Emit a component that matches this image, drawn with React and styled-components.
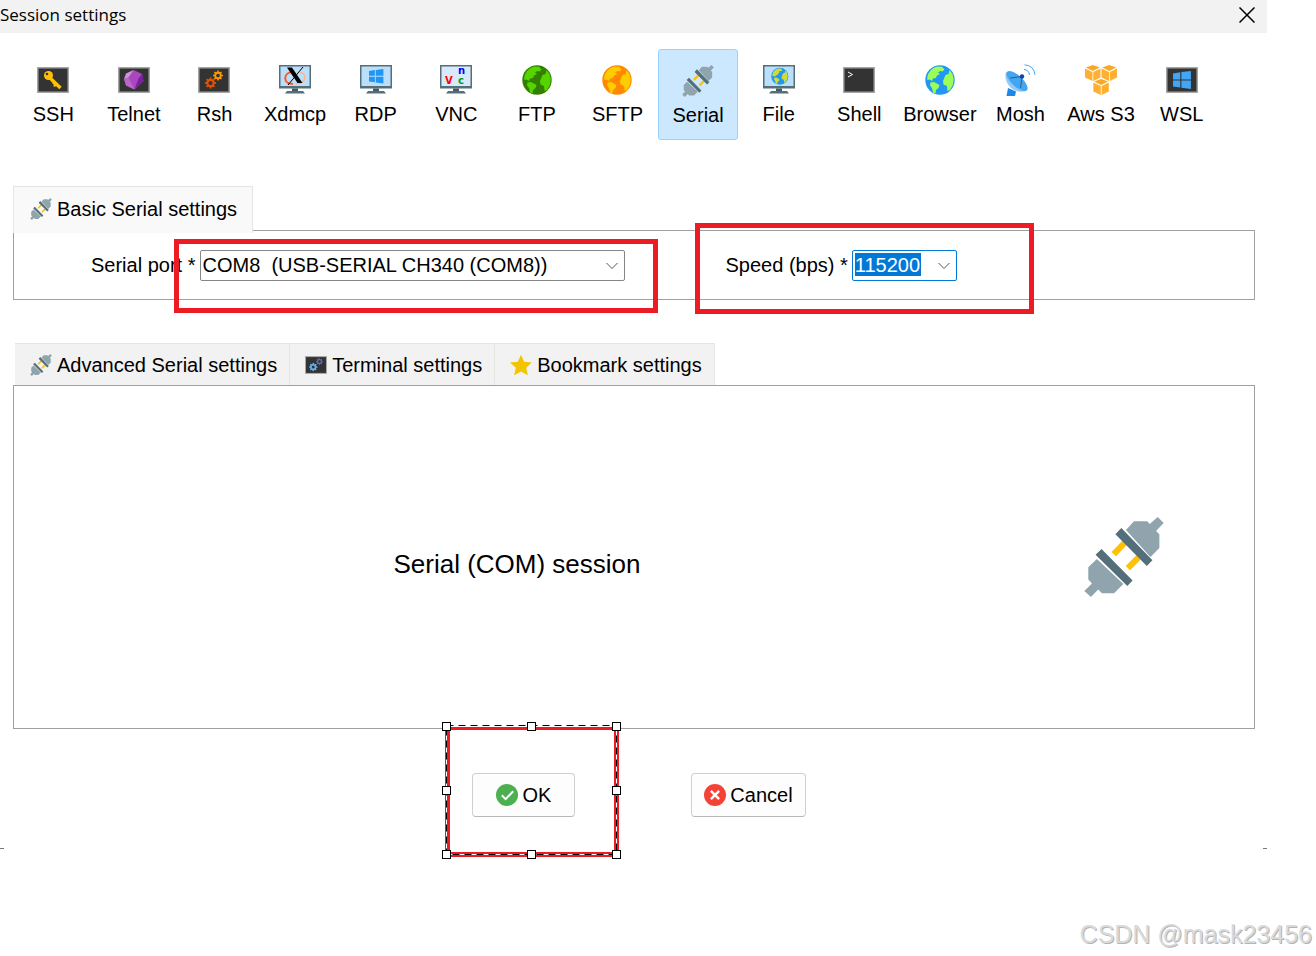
import styled, { createGlobalStyle } from "styled-components";

const GlobalStyle = createGlobalStyle`
  * {
    box-sizing: border-box;
  }
  body {
    margin: 0;
    background-color: #fff;
    color: #000;
    font-family: "Liberation Sans", Arial, sans-serif;
    font-size: 20px;
    line-height: 24px;
  }
  button,
  select {
    margin: 0;
    font: inherit;
    color: inherit;
  }
  svg {
    display: block;
    flex: none;
  }
`;

const StyledDialog = styled.div`
  position: relative;
  margin-right: 49px;
  padding-bottom: 32px;
  &::before,
  &::after {
    content: "";
    position: absolute;
    bottom: 0;
    width: 4px;
    height: 1px;
    background-color: #777;
  }
  &::before {
    left: 0;
  }
  &::after {
    right: 0;
  }
`;
const StyledTitleBar = styled.header`
  display: flex;
  justify-content: space-between;
  align-items: center;
  height: 33px;
  padding-right: 12px;
  background-color: #f2f2f2;
  h1 {
    margin: 0;
    padding-bottom: 4px;
    font: 400 17px/24px "Open Sans", sans-serif;
  }
`;
const StyledCloseButton = styled.button`
  padding: 0 0 4px;
  border: none;
  background: none;
`;
const StyledToolbar = styled.nav`
  display: grid;
  grid-template-columns: repeat(15, 1fr);
  padding: 16px 45px 0 13px;
`;
const StyledTool = styled.button`
  display: flex;
  flex-direction: column;
  align-items: center;
  gap: 6px;
  height: 91px;
  padding: 15px 0 0;
  white-space: nowrap;
  background-color: ${({ $active }) => ($active ? "#cce8ff" : "transparent")};
  border: ${({ $active }) => ($active ? "1px solid #99d1ff" : "none")};
  border-radius: 3px;
`;
const StyledMain = styled.main`
  padding: 46px 12px 0 13px;
`;
const StyledTabs = styled.div`
  display: flex;
  padding-left: 2px;
`;
const StyledTab = styled.button`
  display: flex;
  align-items: center;
  gap: 5px;
  height: 42px;
  padding: 0 12px 0 15px;
  white-space: nowrap;
  background-color: #f2f2f2;
  border: solid #e5e5e5;
  border-width: 1px 1px 0 0;
`;
const StyledActiveTab = styled(StyledTab)`
  position: relative;
  height: 47px;
  margin-bottom: -3px;
  padding: 0 15px 2px 16px;
  background-color: #f9f9f9;
  border-width: 1px 1px 0 1px;
`;
const StyledPanel = styled.section`
  border: 1px solid #a0a0a0;
`;
const StyledFieldPanel = styled(StyledPanel)`
  display: flex;
  gap: 101px;
  margin-bottom: 43px;
  padding: 19px 0 18px 77px;
`;
const StyledSessionPanel = styled(StyledPanel)`
  display: grid;
  grid-template-columns: 1fr 208px;
  align-items: center;
  justify-items: center;
  height: 344px;
  padding-right: 26px;
  h2 {
    margin: 0;
    padding-top: 14px;
    font-size: 26px;
    font-weight: 400;
    line-height: 32px;
  }
`;
const StyledField = styled.div`
  position: relative;
  display: flex;
  align-items: center;
  gap: 4px;
  white-space: nowrap;
  label {
    padding-bottom: 2px;
  }
`;
const StyledCombo = styled.div`
  position: relative;
  width: ${({ $width }) => $width};
  svg {
    position: absolute;
    top: 12px;
    right: 7px;
    pointer-events: none;
  }
`;
const StyledSelect = styled.select`
  display: block;
  width: 100%;
  height: 31px;
  padding: 2px 35px 4px 2px;
  appearance: none;
  outline: none;
  border: 1px solid #868686;
  border-radius: 2px;
  background-color: #fff;
`;
const StyledSelectedSelect = styled(StyledSelect)`
  border-color: #0078d7;
  background-color: #0078d7;
  background-clip: content-box;
  color: #fff;
`;
const StyledMark = styled.div`
  position: absolute;
  inset: ${({ $inset }) => $inset};
  border: 5px solid #ed1c24;
  pointer-events: none;
`;
const StyledFooter = styled.footer`
  display: flex;
  justify-content: center;
  gap: 116px;
  padding: 44px 0 0 10px;
`;
const StyledAction = styled.div`
  position: relative;
`;
const StyledButton = styled.button`
  display: flex;
  align-items: center;
  justify-content: center;
  gap: 4px;
  min-width: 103px;
  height: 44px;
  padding: 0 12px;
  background-color: #fdfdfd;
  border: 1px solid #d0d0d0;
  border-bottom-color: #b8b8b8;
  border-radius: 4px;
`;
const StyledSelection = styled.svg`
  position: absolute;
  top: -52px;
  left: -31px;
  pointer-events: none;
`;
const StyledWatermark = styled.p`
  margin: 69px 4px 0 0;
  text-align: right;
  font-size: 25px;
  line-height: 32px;
  color: #dadada;
  text-shadow: 1px 1px 0 #b4b4b4;
`;

function Icon({ size = 32, children }) {
  return (
    <svg width={size} height={size} viewBox="0 0 32 32" aria-hidden="true">
      {children}
    </svg>
  );
}

function Screen() {
  return (
    <>
      <path fill="#a6a6a6" d="M0 3h32v26H0z" />
      <path fill="#333" d="M1.5 4.5h29v23h-29z" />
    </>
  );
}

function Monitor({ fill = "#bbdefb" }) {
  return (
    <>
      <path fill="#546e7a" d="M0 1h32v23.500H0z" />
      <path fill={fill} d="M1.500 2.500h29v19.500h-29z" />
      <path fill="#455a64" d="M13 24.500h6v3h-6z" />
      <path fill="#546e7a" d="M8 27h16l2 2.500H6z" />
    </>
  );
}

function Globe({ sea, land }) {
  return (
    <>
      <circle cx="16" cy="16" r="14.700" fill={sea} />
      <path
        fill={land}
        d="M4.500 9.500C6.500 5.500 10 3 13.500 2.500L18 2.800 20.500 5.500 18.500 7.500 16.500 7 14 8.500 16 10 13 11.500 12 14 9 14.500 8 17 5.500 15.500 3.500 16C2.800 14 3.500 11.500 4.500 9.500zM6.500 18.500l3.500-.5 5.500 3-1 3-2.500 2-.5 3.500-2.500-1-1-4.500-2-2.500zM19 17l2.500-6 3-1 1-4 3 4 1.200 5-.7 5.500-3 5.500-2.500 1-.5-5-3.500-1.500z"
      />
    </>
  );
}

function Gear({ x, y, r, color }) {
  const teeth = [0, 45, 90, 135, 180, 225, 270, 315];
  return (
    <g transform={`translate(${x} ${y})`} fill={color}>
      <circle r={r * 0.62} fill="none" stroke={color} strokeWidth={r * 0.42} />
      {teeth.map((angle) => (
        <rect
          key={angle}
          x={-r * 0.18}
          y={-r * 1.1}
          width={r * 0.36}
          height={r * 0.4}
          transform={`rotate(${angle})`}
        />
      ))}
    </g>
  );
}

function WindowsLogo({ fill }) {
  return (
    <path
      fill={fill}
      d="M0 2.200L6.500 1.200V7.500H0zM7.500 1L16 0V7.500H7.500zM0 8.500H6.500V14.800L0 13.800zM7.500 8.500H16V16L7.500 15z"
    />
  );
}

function Plug({ size = 32 }) {
  return (
    <svg width={size} height={size} viewBox="72 51 240 242" aria-hidden="true">
      <path
        fill="#90a4ae"
        d="M198 90l24-26h40l8 8 24-21 18 18-23 24 10 10v42l-27 27zM110 178l-26 25v37l11 12-23 23 20 18 22-23 11 12h37l28-28z"
      />
      <path
        fill="#ffc107"
        d="M188 122l14 12-34 36-14-13zM230 166l12 14-32 32-13-13z"
      />
      <path
        fill="#546e7a"
        d="M184 84l94 98-17 17-95-96zM124 148l94 95-16 17-96-95z"
      />
    </svg>
  );
}

function Cube({ x, y }) {
  return (
    <g transform={`translate(${x} ${y})`}>
      <path fill="#ffb032" d="M0 3.500L7.500 7v9L0 12.500z" />
      <path fill="#ffb032" d="M8.300 7L15.500 3.500v9L8.300 16z" />
      <path fill="#f9a825" d="M.8 2.600L7.800 0l7 2.600-7 3.300z" />
    </g>
  );
}

function Chevron() {
  return (
    <svg width="12" height="8" viewBox="0 0 12 8" aria-hidden="true">
      <path d="M.5 1l5.500 5.500L11.500 1" fill="none" stroke="#555" />
    </svg>
  );
}

const tools = [
  {
    name: "SSH",
    icon: (
      <Icon>
        <Screen />
        <path stroke="#ffc107" strokeWidth="3.500" d="M12 13l11.500 11" />
        <path fill="#ffc107" d="M15 19l2 2-1 1 2 1 2-2-3-4z" />
        <circle cx="11.500" cy="11.500" r="4.500" fill="#ffc107" />
        <circle cx="10" cy="10" r="1.300" fill="#333" />
      </Icon>
    ),
  },
  {
    name: "Telnet",
    icon: (
      <Icon>
        <Screen />
        <path fill="#ab47bc" d="M15.500 6l8.500 4 1.500 7-9 8.500-8.500-4L6 15z" />
        <path fill="#ce93d8" d="M15.500 6l-5 7.500L6 15l2-5.500z" />
        <path fill="#ba68c8" d="M10.500 13.500L6 15l2 6.500 8.500 4z" />
        <path fill="#7b1fa2" d="M20.500 14.500L24 10l1.500 7-9 8.500z" />
      </Icon>
    ),
  },
  {
    name: "Rsh",
    icon: (
      <Icon>
        <Screen />
        <Gear x={12.500} y={19} r={5} color="#e65100" />
        <Gear x={20} y={11.500} r={4.500} color="#ff9800" />
      </Icon>
    ),
  },
  {
    name: "Xdmcp",
    icon: (
      <Icon>
        <Monitor />
        <path
          d="M12 8C4 10 4 20 14 20"
          fill="none"
          stroke="#ff5722"
          strokeWidth="2"
        />
        <path
          d="M17 20C28 19 28 9 21 8.500"
          fill="none"
          stroke="#ffb48a"
          strokeWidth="1.500"
        />
        <path d="M24 3L9 21" stroke="#000" />
        <path fill="#000" d="M8 3.500h5L23.500 19h-5z" />
      </Icon>
    ),
  },
  {
    name: "RDP",
    icon: (
      <Icon>
        <Monitor />
        <g transform="translate(9 5) scale(.9)">
          <WindowsLogo fill="#2196f3" />
        </g>
      </Icon>
    ),
  },
  {
    name: "VNC",
    icon: (
      <Icon>
        <Monitor fill="#d8e9fa" />
        <g fontFamily="DejaVu Sans" fontWeight="700" fontSize="10">
          <text x="5" y="20" fill="#f00">
            V
          </text>
          <text x="18" y="10" fill="#00f">
            n
          </text>
          <text x="18" y="20" fill="#009a1a">
            c
          </text>
        </g>
      </Icon>
    ),
  },
  {
    name: "FTP",
    icon: (
      <Icon>
        <Globe sea="#338000" land="#55d400" />
      </Icon>
    ),
  },
  {
    name: "SFTP",
    icon: (
      <Icon>
        <Globe sea="#ff8800" land="#ffcc00" />
      </Icon>
    ),
  },
  { name: "Serial", icon: <Plug /> },
  {
    name: "File",
    icon: (
      <Icon>
        <Monitor />
        <g transform="translate(7.500 3) scale(.58)">
          <Globe sea="#2196f3" land="#cddc39" />
        </g>
      </Icon>
    ),
  },
  {
    name: "Shell",
    icon: (
      <Icon>
        <Screen />
        <path d="M5 8l4.500 2.500L5 13" fill="none" stroke="#fff" />
      </Icon>
    ),
  },
  {
    name: "Browser",
    icon: (
      <Icon>
        <Globe sea="#2196f3" land="#9cff57" />
      </Icon>
    ),
  },
  {
    name: "Mosh",
    icon: (
      <Icon>
        <path fill="#1e88e5" d="M4 24l8 3.500-1 4.500H2.500z" />
        <path fill="#90caf9" d="M2 8C-1 17 8 31 22 27z" />
        <ellipse
          cx="13"
          cy="17"
          rx="13.500"
          ry="5.500"
          fill="#42a5f5"
          transform="rotate(43 13 17)"
        />
        <path d="M6 14l12-1.500L16.500 24" fill="none" stroke="#455a64" />
        <circle cx="18" cy="12.500" r="2.200" fill="#0d47a1" />
        <path
          d="M20 5.500q5 .5 5.500 5.500M20.500.8q9.500.7 10.500 10"
          fill="none"
          stroke="#42a5f5"
        />
      </Icon>
    ),
  },
  {
    name: "Aws S3",
    icon: (
      <Icon>
        <Cube x={0} y={1} />
        <Cube x={16.500} y={1} />
        <Cube x={8.300} y={15} />
      </Icon>
    ),
  },
  {
    name: "WSL",
    icon: (
      <Icon>
        <Screen />
        <g transform="translate(7 7) scale(1.120)">
          <WindowsLogo fill="#42a5f5" />
        </g>
      </Icon>
    ),
  },
];

const handles = [
  [5, 5],
  [90, 5],
  [175, 5],
  [5, 69],
  [175, 69],
  [5, 133],
  [90, 133],
  [175, 133],
];

function Selection() {
  return (
    <StyledSelection width="182" height="140" aria-hidden="true">
      <path
        fill="#ed1c24"
        fillRule="evenodd"
        d="M4 6h174v130H4zM9 9v122h164V9z"
      />
      <rect
        x="5.500"
        y="4.500"
        width="170"
        height="129"
        fill="none"
        stroke="#fff"
      />
      <rect
        x="5.500"
        y="4.500"
        width="170"
        height="129"
        fill="none"
        stroke="#000"
        strokeDasharray="7 5"
      />
      {handles.map(([x, y]) => (
        <rect
          key={`${x}-${y}`}
          x={x - 3.5}
          y={y - 3.5}
          width="8"
          height="8"
          fill="#fff"
          stroke="#000"
        />
      ))}
    </StyledSelection>
  );
}

function App() {
  return (
    <>
      <GlobalStyle />
      <StyledDialog role="dialog" aria-labelledby="title">
        <StyledTitleBar>
          <h1 id="title">Session settings</h1>
          <StyledCloseButton aria-label="Close">
            <svg width="16" height="16" viewBox="0 0 16 16">
              <path
                d="M.5.5l15 15M15.500.5l-15 15"
                stroke="#000"
                strokeWidth="1.500"
              />
            </svg>
          </StyledCloseButton>
        </StyledTitleBar>
        <StyledToolbar>
          {tools.map(({ name, icon }) => (
            <StyledTool key={name} $active={name === "Serial"}>
              {icon}
              <span>{name}</span>
            </StyledTool>
          ))}
        </StyledToolbar>
        <StyledMain>
          <StyledActiveTab>
            <Plug size={22} />
            Basic Serial settings
          </StyledActiveTab>
          <StyledFieldPanel>
            <StyledField>
              <label htmlFor="port">Serial port *</label>
              <StyledCombo $width="425px">
                <StyledSelect id="port">
                  <option>COM8{"\u00a0\u00a0"}(USB-SERIAL CH340 (COM8))</option>
                </StyledSelect>
                <Chevron />
                <StyledMark $inset="-11px -33px -32px -26px" />
              </StyledCombo>
            </StyledField>
            <StyledField>
              <label htmlFor="speed">Speed (bps) *</label>
              <StyledCombo $width="105px">
                <StyledSelectedSelect id="speed">
                  <option>115200</option>
                </StyledSelectedSelect>
                <Chevron />
              </StyledCombo>
              <StyledMark $inset="-27px -77px -33px -31px" />
            </StyledField>
          </StyledFieldPanel>
          <StyledTabs>
            <StyledTab>
              <Plug size={22} />
              Advanced Serial settings
            </StyledTab>
            <StyledTab>
              <Icon size={22}>
                <Screen />
                <Gear x={12} y={19} r={5.5} color="#64b5f6" />
                <Gear x={21} y={11} r={4.5} color="#5c6bc0" />
              </Icon>
              Terminal settings
            </StyledTab>
            <StyledTab>
              <Icon size={22}>
                <path
                  fill="#f5c400"
                  d="M16 1l4.600 10.300L32 12.500l-8.500 7.600L26 31l-10-5.600L6 31l2.500-10.900L0 12.500l11.400-1.200z"
                />
              </Icon>
              Bookmark settings
            </StyledTab>
          </StyledTabs>
          <StyledSessionPanel>
            <h2>Serial (COM) session</h2>
            <Plug size={80} />
          </StyledSessionPanel>
          <StyledFooter>
            <StyledAction>
              <StyledButton>
                <Icon size={22}>
                  <circle cx="16" cy="16" r="16" fill="#4caf50" />
                  <path
                    d="M8.500 16.500l5.500 5.500L25 10.500"
                    fill="none"
                    stroke="#fff"
                    strokeWidth="3"
                  />
                </Icon>
                OK
              </StyledButton>
              <Selection />
            </StyledAction>
            <StyledButton>
              <Icon size={22}>
                <circle cx="16" cy="16" r="16" fill="#f44336" />
                <path
                  d="M10 10l12 12M22 10L10 22"
                  stroke="#fff"
                  strokeWidth="3.500"
                />
              </Icon>
              Cancel
            </StyledButton>
          </StyledFooter>
        </StyledMain>
      </StyledDialog>
      <StyledWatermark>CSDN @mask23456</StyledWatermark>
    </>
  );
}

export default App;
